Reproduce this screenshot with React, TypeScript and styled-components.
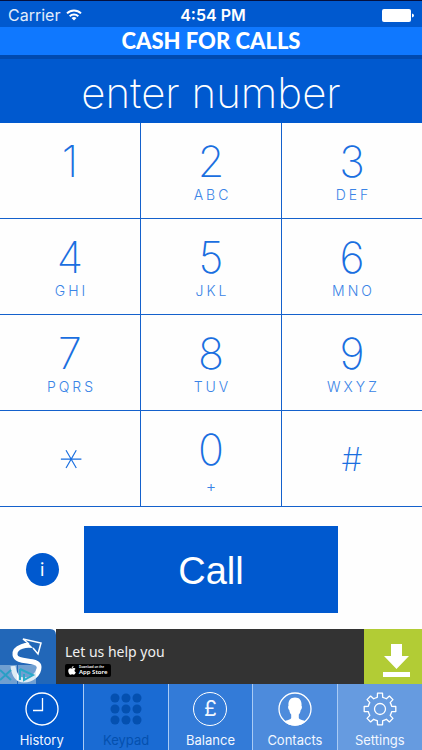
import React from "react";
import styled, { createGlobalStyle } from "styled-components";

const blue = "#0059cf";
const line = "#1461cc";
const ink = "#1a6fe0";

const GlobalStyle = createGlobalStyle`
  *, *::before, *::after { box-sizing: border-box; }
  body { margin: 0; background: #fff; font-family: Inter, "Liberation Sans", sans-serif; }
  button { font: inherit; margin: 0; padding: 0; border: 0; background: none; color: inherit; cursor: pointer; }
  svg { display: block; }
`;

const Screen = styled.div`
  display: flex;
  flex-direction: column;
  min-height: 100vh;
  border-top: 1px solid #04103f;
  border-bottom: 1px solid #041a4c;
  background: #fefefe;
`;

const StatusBar = styled.div`
  display: grid;
  grid-template-columns: 1fr auto 1fr;
  align-items: center;
  height: 26px;
  padding: 2px 8px 0;
  background: ${blue};
  color: #fff;
  font-size: 16px;
  line-height: 20px;
`;

const Carrier = styled.div`
  display: flex;
  align-items: center;
  gap: 6px;
  color: #e2edfc;
`;

const Clock = styled.time`
  padding-left: 4px;
  font-weight: 600;
`;

const BatterySlot = styled.div`
  justify-self: end;
`;

const TitleBar = styled.h1`
  margin: 0;
  height: 28px;
  background: #0f78ff;
  color: #fff;
  font-family: Lato, sans-serif;
  font-size: 22px;
  font-weight: 900;
  line-height: 28px;
  text-align: center;
`;

const NumberInput = styled.input`
  width: 100%;
  height: 68px;
  padding: 2px 0 0;
  border: 0;
  border-top: 4px solid #004ab0;
  border-radius: 0;
  outline: 0;
  background: ${blue};
  color: #fff;
  font-family: Inter, sans-serif;
  font-size: 42px;
  font-weight: 200;
  text-align: center;
  &::placeholder { color: #fff; opacity: 1; }
`;

const Keys = styled.div`
  display: grid;
  grid-template-columns: repeat(3, 1fr);
  grid-auto-rows: 96px;
  column-gap: 1px;
  background: ${line};
`;

const Key = styled.button`
  display: flex;
  flex-direction: column;
  align-items: center;
  justify-content: flex-start;
  padding-top: 16px;
  border-bottom: 1px solid ${line};
  background: #fefefe;
  color: ${ink};
`;

const Digit = styled.span`
  font-size: 43px;
  font-weight: 200;
  line-height: 44px;
`;

const Star = styled(Digit)`
  font-size: 50px;
  font-weight: 100;
  line-height: 80px;
  transform: rotate(30deg);
  transform-origin: center 33px;
`;

const Hash = styled(Digit)`
  font-size: 33px;
  line-height: 64px;
`;

const Letters = styled.span`
  margin-top: 4px;
  padding-left: 3px;
  color: #3a84e6;
  font-size: 14px;
  font-weight: 300;
  line-height: 16px;
  letter-spacing: 3px;
`;

const Plus = styled.span`
  margin-top: 7px;
  color: #3a84e6;
  font-size: 16px;
  font-weight: 300;
  line-height: 16px;
`;

const Actions = styled.div`
  display: grid;
  grid-template-columns: 1fr 3fr 1fr;
  align-items: center;
  flex: 1;
  padding: 18px 0 16px;
`;

const InfoButton = styled.button`
  justify-self: center;
  width: 33px;
  height: 33px;
  border-radius: 50%;
  background: ${blue};
  color: #fff;
  font-size: 18px;
  line-height: 33px;
`;

const CallButton = styled.button`
  height: 87px;
  padding-top: 4px;
  background: ${blue};
  color: #fff;
  font-family: "Liberation Sans", Arial, sans-serif;
  font-size: 38px;
`;

const Ad = styled.a`
  display: flex;
  height: 55px;
  background: #333;
  color: #f0f0f0;
  text-decoration: none;
`;

const AdCopy = styled.div`
  display: flex;
  flex: 1;
  flex-direction: column;
  align-items: flex-start;
  gap: 2px;
  padding: 13px 0 0 9px;
  font-family: "Noto Sans", sans-serif;
  font-size: 14px;
  line-height: 20px;
`;

const StoreBadge = styled.span`
  display: flex;
  align-items: center;
  gap: 3px;
  height: 13px;
  padding: 0 3px;
  border-radius: 2px;
  background: #000;
  color: #fff;
`;

const StoreText = styled.span`
  display: flex;
  flex-direction: column;
  font-size: 6px;
  font-weight: 600;
  line-height: 7px;
`;

const StoreHint = styled.small`
  font-size: 3px;
  line-height: 4px;
`;

const Download = styled.span`
  display: flex;
  align-items: center;
  justify-content: center;
  width: 58px;
  padding: 8px 0 0 6px;
  background: #b2cc35;
`;

const TabBar = styled.nav`
  display: grid;
  grid-template-columns: repeat(5, 1fr);
  height: 65px;
`;

const Tab = styled.button<{ $bg: string; $active?: boolean }>`
  display: flex;
  flex-direction: column;
  align-items: center;
  gap: 4px;
  padding-top: 8px;
  border-right: 1px solid #a9cbf5;
  background: ${(p) => p.$bg};
  color: ${(p) => (p.$active ? "#0450ae" : "#f2f7ff")};
  font-size: 13px;
  line-height: 20px;
  &:last-child { border-right: 0; }
`;

const WifiIcon = () => (
  <svg width="16" height="12" viewBox="0 0 16 12" fill="none" stroke="#fff" strokeWidth="2">
    <path d="M1 4.4a10 10 0 0 1 14 0M3.7 7.2a6.2 6.2 0 0 1 8.6 0" />
    <path d="M8 11.6 5.5 9.1a3.6 3.6 0 0 1 5 0z" fill="#fff" stroke="none" />
  </svg>
);

const BatteryIcon = () => (
  <svg width="32" height="13" viewBox="0 0 32 13" fill="#fff">
    <rect x="0" y="0" width="29" height="13" rx="2" />
    <path d="M30 4.5q2 .5 2 2t-2 2z" />
  </svg>
);

const AdLogo = () => (
  <svg width="56" height="55" viewBox="0 0 56 55">
    <rect width="56" height="55" fill="#fff" />
    <path d="M0 0h50q6 0 6 6v49H0z" fill="#2267b8" />
    <path d="M37 18C27 14 14 18 15 26c1 9 24 3 24 12 0 8-8 13-15 13-6 0-10-5-11-14" fill="none" stroke="#fff" strokeWidth="5" />
    <path d="M29 15 23 10l18 4-3 11-5-6" fill="#2267b8" stroke="#fff" strokeWidth="1.5" />
    <path d="M0 36h17v19H0zM18 36h18v19H18z" fill="#bed7e9" opacity=".5" />
    <path d="M0 41l11 10M11 41 0 51" stroke="#299fc5" strokeWidth="2" />
    <path d="M20 40v11M20 40l13 6-9 5v-6" fill="none" stroke="#29a9c9" strokeWidth="2" />
  </svg>
);

const AppleIcon = () => (
  <svg width="8" height="9" viewBox="0 0 16 18" fill="#fff">
    <path d="M11 0c0 2-1 4-3.500 4C7.500 2 9 .5 11 0zM8 5c1 0 2-1 4-.8 1.500.1 2.500.8 3 1.700-3 2-2.500 5.500.7 6.800C14.500 15.500 13 17.500 11.500 17.500c-1.300 0-1.800-.8-3.300-.8s-2 .8-3.200.8C3 17.500.5 13.500.5 10S2.500 4.500 5 4.500c1.300 0 2 .5 3 .5z" />
  </svg>
);

const DownloadIcon = () => (
  <svg width="27" height="33" viewBox="0 0 27 33" fill="#fff">
    <path d="M8 0h11v12h7L13.500 25 1 12h7zM0 28h27v5H0z" />
  </svg>
);

const HistoryIcon = () => (
  <svg width="34" height="34" viewBox="0 0 34 34" fill="none" stroke="#fff" strokeWidth="1.300">
    <circle cx="17" cy="17" r="16" />
    <path d="M17.500 6v12.500H8" />
  </svg>
);

const KeypadIcon = () => (
  <svg width="34" height="34" viewBox="0 0 34 34" fill="#0450b0">
    {[6, 17, 28].map((y) => [6, 17, 28].map((x) => <circle key={`${x}-${y}`} cx={x} cy={y} r="4.500" />))}
  </svg>
);

const PoundRing = styled.span`
  width: 34px;
  height: 34px;
  border: 1px solid #fff;
  border-radius: 50%;
  font-size: 21px;
  line-height: 32px;
  text-align: center;
`;

const ContactsIcon = () => (
  <svg width="34" height="34" viewBox="0 0 34 34">
    <circle cx="17" cy="17" r="16" fill="none" stroke="#fff" strokeWidth="1.300" />
    <path d="M17 5.500c-5 0-7 3.500-6.500 8.500-.8 0-.5 3.500.8 4 .3 2 .9 3.500 1.900 4.500v3.500c-1 2-4.500 2-7 3.500a16 16 0 0 0 21.600 0c-2.500-1.500-6-1.500-7-3.500v-3.500c1-1 1.600-2.500 1.900-4.500 1.300-.5 1.600-4 .8-4C24 9 22 5.500 17 5.500z" fill="#fff" />
  </svg>
);

const gearPath = (() => {
  const parts: string[] = [];
  const at = (r: number, deg: number) => {
    const a = (deg * Math.PI) / 180;
    return `${(17 + r * Math.sin(a)).toFixed(2)} ${(17 - r * Math.cos(a)).toFixed(2)}`;
  };
  for (let i = 0; i < 8; i++) {
    const c = i * 45;
    parts.push(`${i ? "L" : "M"}${at(12, c - 13)}L${at(16, c - 9)}L${at(16, c + 9)}L${at(12, c + 13)}A12 12 0 0 1 ${at(12, c + 32)}`);
  }
  return parts.join("") + "Z";
})();

const SettingsIcon = () => (
  <svg width="34" height="34" viewBox="0 0 34 34" fill="none" stroke="#fff" strokeWidth="1.300" strokeLinejoin="round">
    <path d={gearPath} />
    <circle cx="17" cy="17" r="5.500" />
  </svg>
);

const keys = [
  { digit: "1" }, { digit: "2", letters: "ABC" }, { digit: "3", letters: "DEF" },
  { digit: "4", letters: "GHI" }, { digit: "5", letters: "JKL" }, { digit: "6", letters: "MNO" },
  { digit: "7", letters: "PQRS" }, { digit: "8", letters: "TUV" }, { digit: "9", letters: "WXYZ" },
  { digit: "*", face: Star }, { digit: "0", plus: true }, { digit: "#", face: Hash },
];

const tabs = [
  { label: "History", bg: "#0059cf", icon: <HistoryIcon /> },
  { label: "Keypad", bg: "#1a6bd3", icon: <KeypadIcon />, active: true },
  { label: "Balance", bg: "#337bd8", icon: <PoundRing aria-hidden="true">£</PoundRing> },
  { label: "Contacts", bg: "#4d8bdc", icon: <ContactsIcon /> },
  { label: "Settings", bg: "#669be0", icon: <SettingsIcon /> },
];

export default function App() {
  return (
    <>
      <GlobalStyle />
      <Screen>
        <StatusBar>
          <Carrier>Carrier <WifiIcon /></Carrier>
          <Clock>4:54 PM</Clock>
          <BatterySlot><BatteryIcon /></BatterySlot>
        </StatusBar>
        <TitleBar>CASH FOR CALLS</TitleBar>
        <NumberInput type="tel" aria-label="Phone number" placeholder="enter number" />
        <Keys>
          {keys.map(({ digit, letters, plus, face: Face = Digit }) => (
            <Key key={digit} type="button">
              <Face>{digit}</Face>
              {letters && <Letters>{letters}</Letters>}
              {plus && <Plus>+</Plus>}
            </Key>
          ))}
        </Keys>
        <Actions>
          <InfoButton type="button" aria-label="Information">i</InfoButton>
          <CallButton type="button">Call</CallButton>
        </Actions>
        <Ad href="#">
          <AdLogo />
          <AdCopy>
            Let us help you
            <StoreBadge>
              <AppleIcon />
              <StoreText>
                <StoreHint>Download on the</StoreHint>
                App Store
              </StoreText>
            </StoreBadge>
          </AdCopy>
          <Download><DownloadIcon /></Download>
        </Ad>
        <TabBar>
          {tabs.map((t) => (
            <Tab key={t.label} type="button" $bg={t.bg} $active={t.active} aria-current={t.active ? "page" : undefined}>
              {t.icon}
              {t.label}
            </Tab>
          ))}
        </TabBar>
      </Screen>
    </>
  );
}
